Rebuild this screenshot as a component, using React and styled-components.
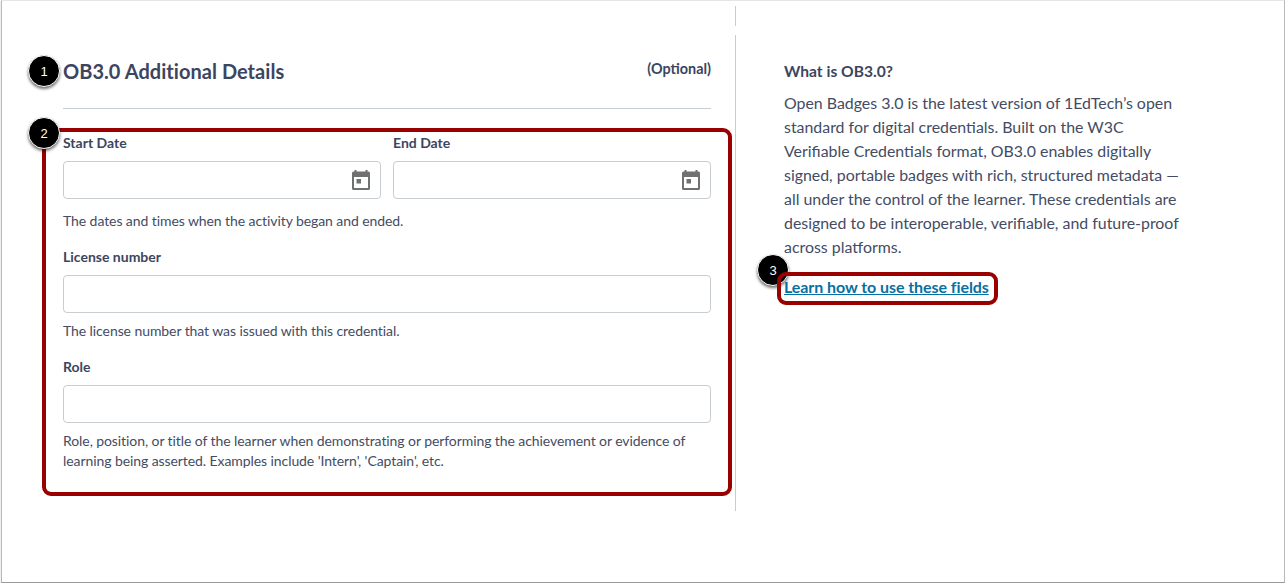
import styled, { createGlobalStyle } from 'styled-components';

const GlobalStyle = createGlobalStyle`
  html, body {
    margin: 0;
    padding: 0;
    background: #fff;
    overflow: hidden;
  }
  * { box-sizing: border-box; }
`;

const Frame = styled.div`
  width: 1284px;
  height: 583px;
  margin-left: 1px;
  background: #fff;
  border-top: 1px solid #e6e6e6;
  border-left: 1px solid #b8b8b8;
  border-right: 1px solid #b8b8b8;
  border-bottom: 1px solid #9a9a9a;
  box-shadow: 0 1px 1px rgba(0, 0, 0, 0.35);
  font-family: Lato, "Open Sans", sans-serif;
  color: #3c4560;
`;

const TopStub = styled.div`
  height: 34px;
  padding-top: 5px;
  padding-left: 733px;
  &::before {
    content: '';
    display: block;
    width: 1px;
    height: 20px;
    background: #c7cdd1;
  }
`;

const Main = styled.div`
  display: flex;
  height: 476px;
`;

const LeftColumn = styled.section`
  width: 734px;
  padding: 0 24px 0 61px;
  border-right: 1px solid #c7cdd1;
`;

const Header = styled.header`
  display: flex;
  justify-content: space-between;
  align-items: flex-start;
  height: 74px;
  padding-top: 24px;
  border-bottom: 1px solid #c7cdd1;
  position: relative;
`;

const Title = styled.h2`
  margin: 0;
  font-size: 20px;
  line-height: 25px;
  font-weight: 700;
  letter-spacing: 0.04px;
`;

const Optional = styled.span`
  font-size: 14.4px;
  line-height: 20px;
  font-weight: 700;
`;

const Fields = styled.div`
  position: relative;
  padding-top: 25px;
`;

const Highlight = styled.div`
  position: absolute;
  top: ${p => p.$top}px;
  left: ${p => p.$left}px;
  right: ${p => p.$right}px;
  bottom: ${p => p.$bottom}px;
  border: 4px solid #990000;
  border-radius: 9px;
  pointer-events: none;
`;

const Badge = styled.span`
  position: absolute;
  top: ${p => p.$top}px;
  left: ${p => p.$left}px;
  width: 32px;
  height: 32px;
  display: flex;
  align-items: center;
  justify-content: center;
  border-radius: 50%;
  background: #000;
  border: 1px solid #fff;
  box-shadow: 0 2px 3px rgba(0, 0, 0, 0.55);
  color: #fff;
  font-family: "Liberation Sans", Arial, sans-serif;
  font-size: 13px;
  font-weight: 400;
  line-height: 1;
`;

const DateRow = styled.div`
  display: grid;
  grid-template-columns: 318px 318px;
  column-gap: 12px;
`;

const Field = styled.div`
  display: flex;
  flex-direction: column;
`;

const Label = styled.label`
  font-size: 14px;
  line-height: 18px;
  font-weight: 700;
  margin-bottom: 9px;
`;

const InputBox = styled.div`
  position: relative;
  height: 38px;
  border: 1px solid #c7cdd1;
  border-radius: 4px;
  background: #fff;
`;

const CalendarSlot = styled.span`
  position: absolute;
  top: 8px;
  right: 10px;
  display: flex;
`;

const Help = styled.p`
  margin: ${p => p.$before}px 0 ${p => p.$after || 0}px;
  font-size: 14px;
  line-height: 20px;
  letter-spacing: -0.08px;
  color: #434c64;
`;

const RightColumn = styled.aside`
  width: 450px;
  padding: 24px 0 0 48px;
`;

const Subtitle = styled.h3`
  margin: 0 0 8px;
  font-size: 15.6px;
  line-height: 24px;
  font-weight: 700;
`;

const Body = styled.p`
  margin: 0 0 16px;
  font-size: 15.9px;
  line-height: 24px;
  color: #434c64;
`;

const BodyLine = styled.span`
  display: block;
  white-space: nowrap;
`;

const LinkWrap = styled.div`
  position: relative;
  display: inline-block;
`;

const HelpLink = styled.a`
  font-size: 16px;
  line-height: 24px;
  font-weight: 700;
  letter-spacing: -0.07px;
  color: #0770a3;
  text-decoration: underline;
`;

const bodyLines = [
  'Open Badges 3.0 is the latest version of 1EdTech’s open',
  'standard for digital credentials. Built on the W3C',
  'Verifiable Credentials format, OB3.0 enables digitally',
  'signed, portable badges with rich, structured metadata —',
  'all under the control of the learner. These credentials are',
  'designed to be interoperable, verifiable, and future-proof',
  'across platforms.',
];

function CalendarIcon() {
  return (
    <svg width="18" height="20" viewBox="0 0 18 20" aria-hidden="true">
      <path
        fill="#6f7070"
        fillRule="evenodd"
        d="M2.500 0h2v1.500h9V0h2v1.500h1A1.500 1.500 0 0 1 18 3v15.500a1.500 1.500 0 0 1-1.500 1.500h-15A1.500 1.500 0 0 1 0 18.500V3a1.500 1.500 0 0 1 1.500-1.500h1zM2 7v11h14V7zM4.500 9H9v4.500H4.500z"
      />
    </svg>
  );
}

function DateField({ label }) {
  return (
    <Field>
      <Label>{label}</Label>
      <InputBox>
        <CalendarSlot><CalendarIcon /></CalendarSlot>
      </InputBox>
    </Field>
  );
}

export default function App() {
  return (
    <>
      <GlobalStyle />
      <Frame>
        <TopStub />
        <Main>
          <LeftColumn>
            <Header>
              <Badge $top={20} $left={-35}>1</Badge>
              <Title>OB3.0 Additional Details</Title>
              <Optional>(Optional)</Optional>
            </Header>
            <Fields>
              <Highlight $top={19} $left={-21} $right={-21} $bottom={-25} />
              <Badge $top={8} $left={-35}>2</Badge>
              <DateRow>
                <DateField label="Start Date" />
                <DateField label="End Date" />
              </DateRow>
              <Help $before={12} $after={17}>The dates and times when the activity began and ended.</Help>
              <Field>
                <Label>License number</Label>
                <InputBox />
              </Field>
              <Help $before={8} $after={17}>The license number that was issued with this credential.</Help>
              <Field>
                <Label>Role</Label>
                <InputBox />
              </Field>
              <Help $before={8}>
                Role, position, or title of the learner when demonstrating or performing the achievement or evidence of
                learning being asserted. Examples include 'Intern', 'Captain', etc.
              </Help>
            </Fields>
          </LeftColumn>
          <RightColumn>
            <Subtitle>What is OB3.0?</Subtitle>
            <Body>
              {bodyLines.map(line => <BodyLine key={line}>{line}</BodyLine>)}
            </Body>
            <LinkWrap>
              <Badge $top={-21} $left={-27}>3</Badge>
              <Highlight $top={-3} $left={-7} $right={-9} $bottom={-6} />
              <HelpLink href="#">Learn how to use these fields</HelpLink>
            </LinkWrap>
          </RightColumn>
        </Main>
      </Frame>
    </>
  );
}
